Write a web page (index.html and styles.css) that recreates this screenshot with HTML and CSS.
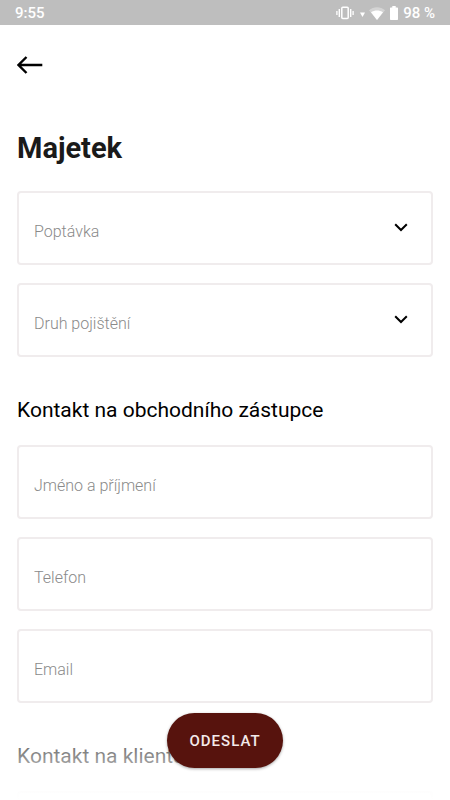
FILE: index.html
```html
<!DOCTYPE html>
<html lang="cs">
<head>
<meta charset="utf-8">
<meta name="viewport" content="width=device-width, initial-scale=1">
<title>Majetek</title>
<link rel="stylesheet" href="styles.css">
</head>
<body>
<div class="app">
  <header class="status">
    <span>9:55</span>
    <div class="status-icons">
      <svg width="18" height="14" viewBox="0 0 18 14" fill="none" stroke="currentColor" aria-hidden="true">
        <rect x="5.8" y="1.2" width="6.4" height="11.2" rx="1" stroke-width="1.5"/>
        <path d="M3.3 3v8M14.7 3v8" stroke-width="1.4"/>
        <path d="M.9 5v4M17.1 5v4" stroke-width="1.3"/>
      </svg>
      <svg class="traffic" width="5" height="5" viewBox="0 0 5 5" aria-hidden="true"><path d="M0 .5h5L2.5 5z" fill="currentColor"/></svg>
      <svg width="16" height="13" viewBox="0 0 16 13" aria-hidden="true">
        <path d="M0 3.2C4.6-.7 11.4-.7 16 3.2L8 13z" fill="currentColor" opacity=".35"/>
        <path d="M2 5.3c3.6-2.5 8.4-2.5 12 0L8 13z" fill="currentColor"/>
      </svg>
      <svg class="battery" width="8" height="14" viewBox="0 0 8 14" aria-hidden="true"><path d="M2.3 0h3.4v1.5H7.3q.7 0 .7.7v11q0 .8-.7.8H.7q-.7 0-.7-.8v-11q0-.7.7-.7h1.6z" fill="currentColor"/></svg>
      <span>98 %</span>
    </div>
  </header>

  <main class="content">
    <button class="back" type="button" aria-label="Zpět">
      <svg width="26" height="18" viewBox="0 0 26 18" fill="none" stroke="currentColor" stroke-width="2.4" aria-hidden="true"><path d="M25.3 9H1.5M9.5 1 1.5 9l8 8"/></svg>
    </button>
    <h1 class="title">Majetek</h1>
    <form id="request" class="form">
      <section class="group">
        <div class="field">
          <select class="control" aria-label="Poptávka"><option>Poptávka</option></select>
          <svg class="chevron" width="14" height="9" viewBox="0 0 14 9" aria-hidden="true"><path d="m1.2 1.2 5.8 5.8 5.8-5.8"/></svg>
        </div>
        <div class="field">
          <select class="control" aria-label="Druh pojištění"><option>Druh pojištění</option></select>
          <svg class="chevron" width="14" height="9" viewBox="0 0 14 9" aria-hidden="true"><path d="m1.2 1.2 5.8 5.8 5.8-5.8"/></svg>
        </div>
      </section>
      <h2 class="subtitle">Kontakt na obchodního zástupce</h2>
      <section class="group">
        <div class="field"><input class="control" type="text" aria-label="Jméno a příjmení" placeholder="Jméno a příjmení"></div>
        <div class="field"><input class="control" type="tel" aria-label="Telefon" placeholder="Telefon"></div>
        <div class="field"><input class="control" type="email" aria-label="Email" placeholder="Email"></div>
      </section>
      <h2 class="subtitle">Kontakt na klienta</h2>
      <section class="group">
        <div class="field"><input class="control" type="text" aria-label="Klient"></div>
      </section>
    </form>
  </main>

  <footer class="dock">
    <button class="submit" type="submit" form="request">ODESLAT</button>
  </footer>
</div>
</body>
</html>
```
FILE: styles.css
```css
* {
  box-sizing: border-box;
}

body {
  margin: 0;
  background: #fff;
  color: #000;
  font-family: Roboto, "Noto Sans", sans-serif;
}

.app {
  position: relative;
  display: flex;
  flex-direction: column;
  height: 100vh;
  overflow: hidden;
}

.status {
  flex: none;
  display: flex;
  align-items: center;
  justify-content: space-between;
  padding: 3px 15px 2px;
  background: #bebebe;
  color: #fff;
  font-size: 15px;
  line-height: 20px;
  font-weight: 500;
}

.status-icons {
  display: flex;
  align-items: center;
  gap: 5px;
}

.traffic {
  margin: 2px -1px 0 1px;
}

.content {
  flex: 1;
  min-height: 0;
  overflow-y: auto;
  scrollbar-width: none;
  padding: 31px 17px 0;
}

.back {
  display: block;
  padding: 0;
  border: 0;
  background: none;
  color: #000;
}

.back svg,
.chevron {
  display: block;
}

.title {
  margin: 54px 0 23px;
  font-size: 29px;
  line-height: 40px;
  font-weight: 700;
  color: #1a1a1a;
}

.group {
  display: grid;
  gap: 18px;
}

.field {
  display: grid;
  align-items: center;
}

.control,
.chevron {
  grid-area: 1 / 1;
}

.control {
  appearance: none;
  width: 100%;
  height: 74px;
  padding: 6px 15px 0;
  border: 2px solid #f0eced;
  border-radius: 4px;
  background: #fff;
  color: #8a8a8a;
  font-family: inherit;
  font-size: 16px;
  font-weight: 300;
}

.control::placeholder {
  color: #8a8a8a;
  opacity: 1;
}

.chevron {
  justify-self: end;
  margin: 0 25px 2px 0;
  fill: none;
  stroke: #000;
  stroke-width: 2;
  pointer-events: none;
}

.subtitle {
  margin: 38px 0 20px;
  font-size: 21px;
  line-height: 30px;
  font-weight: 400;
}

.dock {
  position: absolute;
  right: 0;
  bottom: 0;
  left: 0;
  display: flex;
  justify-content: center;
  padding: 11px 0 32px;
  background: linear-gradient(rgb(255 255 255 / 0), #fff);
}

.submit {
  min-width: 116px;
  height: 55px;
  padding: 0 20px;
  border: 0;
  border-radius: 28px;
  background: #57130d;
  color: #f3eaea;
  font-family: inherit;
  font-size: 15px;
  font-weight: 500;
  letter-spacing: 1px;
  box-shadow: 0 1px 3px rgb(0 0 0 / 0.35);
}
```
